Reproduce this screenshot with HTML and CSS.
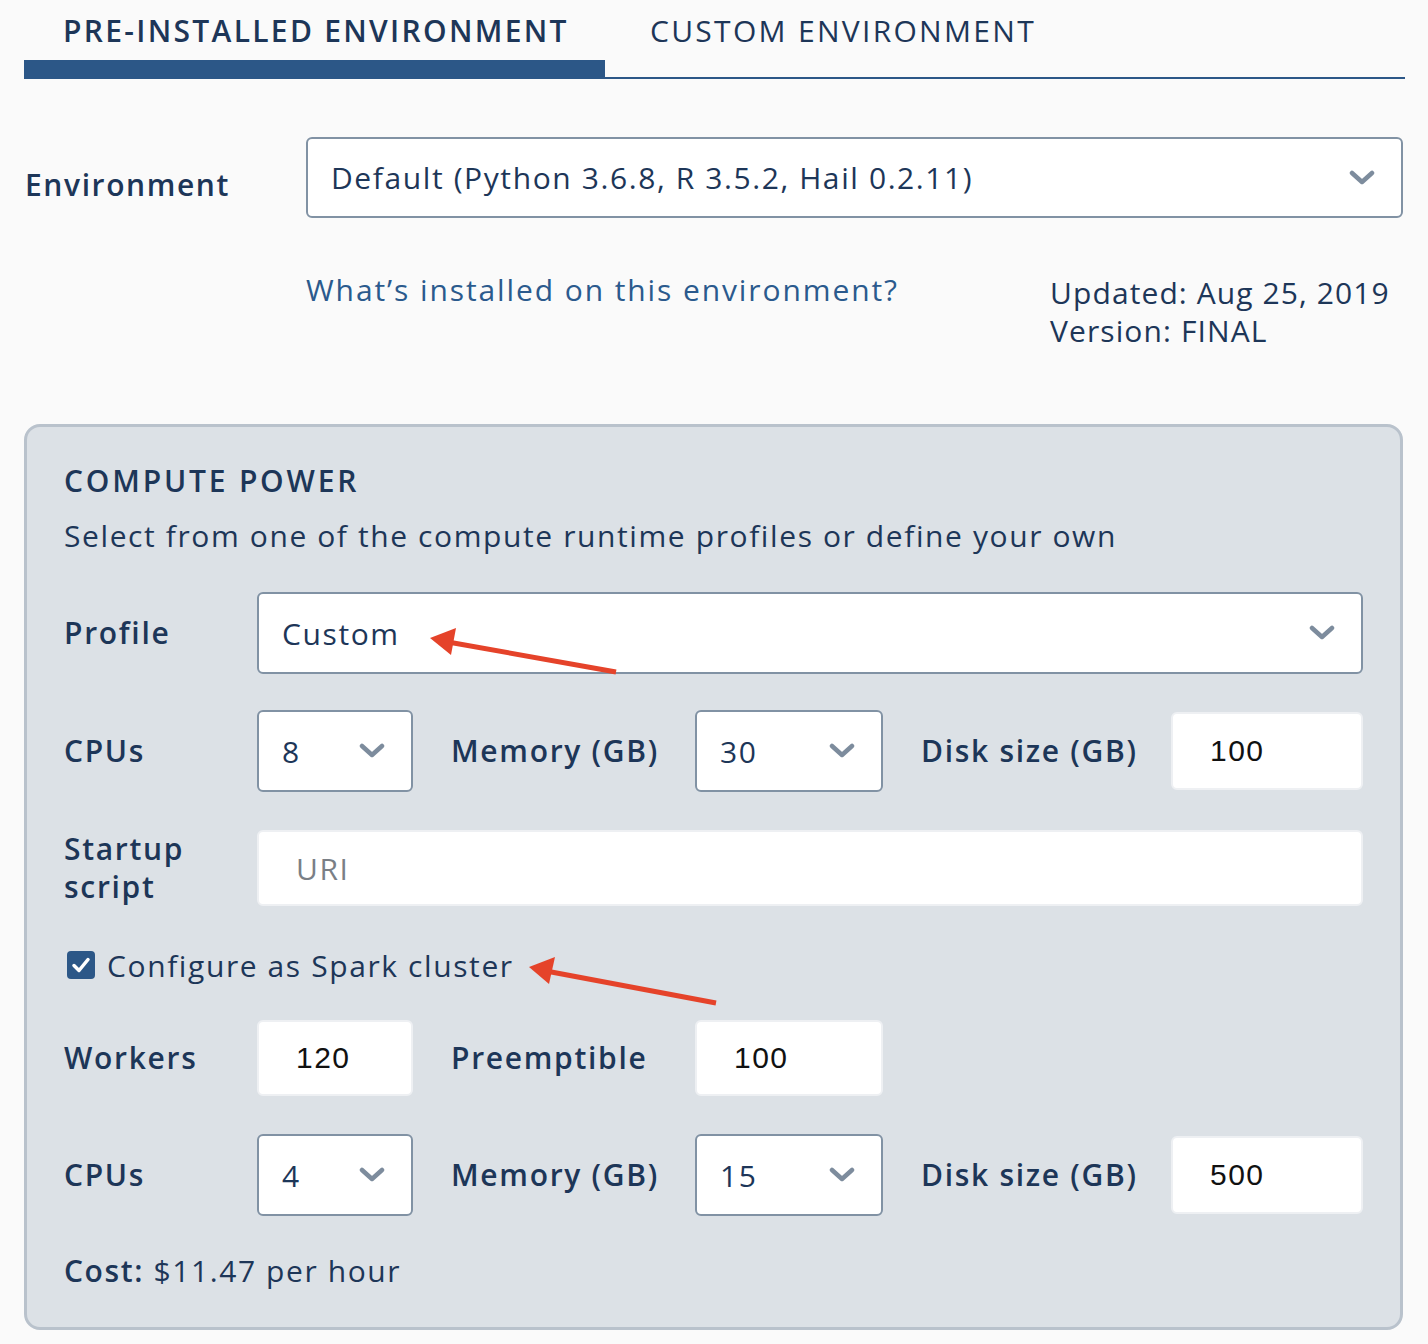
FILE: index.html
```html
<!DOCTYPE html>
<html lang="en">
<head>
<meta charset="utf-8">
<title>Environment</title>
<link rel="stylesheet" href="styles.css">
</head>
<body>
<div class="page">
  <div class="tabs">
    <div class="tab tab-active">PRE-INSTALLED ENVIRONMENT</div>
    <div class="tab tab-idle">CUSTOM ENVIRONMENT</div>
  </div>

  <div class="env-row">
    <div class="env-label">Environment</div>
    <div class="select select-env">
      <span class="select-value">Default (Python 3.6.8, R 3.5.2, Hail 0.2.11)</span>
      <svg class="chev" viewBox="0 0 26 16" width="26" height="16"><polyline points="3,3 13,12 23,3"/></svg>
    </div>
  </div>

  <div class="info-row">
    <a class="env-link" href="#">What’s installed on this environment?</a>
    <div class="meta">
      <div>Updated: Aug 25, 2019</div>
      <div>Version: FINAL</div>
    </div>
  </div>

  <section class="compute">
    <h2 class="compute-title">COMPUTE POWER</h2>
    <p class="compute-sub">Select from one of the compute runtime profiles or define your own</p>

    <div class="grid row-profile">
      <div class="lbl">Profile</div>
      <div class="select span-all">
        <span class="select-value">Custom</span>
        <svg class="chev" viewBox="0 0 26 16" width="26" height="16"><polyline points="3,3 13,12 23,3"/></svg>
      </div>
    </div>

    <div class="grid row-cpus">
      <div class="lbl">CPUs</div>
      <div class="select small">
        <span class="select-value">8</span>
        <svg class="chev" viewBox="0 0 26 16" width="26" height="16"><polyline points="3,3 13,12 23,3"/></svg>
      </div>
      <div class="lbl lbl-pad">Memory (GB)</div>
      <div class="select small">
        <span class="select-value">30</span>
        <svg class="chev" viewBox="0 0 26 16" width="26" height="16"><polyline points="3,3 13,12 23,3"/></svg>
      </div>
      <div class="lbl lbl-pad">Disk size (GB)</div>
      <div class="input num">100</div>
    </div>

    <div class="grid row-startup">
      <div class="lbl">Startup<br>script</div>
      <div class="input span-all placeholder">URI</div>
    </div>

    <label class="check-row">
      <span class="checkbox">
        <svg viewBox="0 0 28 28" width="28" height="28"><polyline points="7,14.5 12,19.5 21,8.5"/></svg>
      </span>
      <span class="check-text">Configure as Spark cluster</span>
    </label>

    <div class="grid row-workers">
      <div class="lbl">Workers</div>
      <div class="input num num-c">120</div>
      <div class="lbl lbl-pad">Preemptible</div>
      <div class="input num num-c">100</div>
    </div>

    <div class="grid row-cpus2">
      <div class="lbl">CPUs</div>
      <div class="select small">
        <span class="select-value">4</span>
        <svg class="chev" viewBox="0 0 26 16" width="26" height="16"><polyline points="3,3 13,12 23,3"/></svg>
      </div>
      <div class="lbl lbl-pad">Memory (GB)</div>
      <div class="select small">
        <span class="select-value">15</span>
        <svg class="chev" viewBox="0 0 26 16" width="26" height="16"><polyline points="3,3 13,12 23,3"/></svg>
      </div>
      <div class="lbl lbl-pad">Disk size (GB)</div>
      <div class="input num">500</div>
    </div>

    <div class="cost"><b>Cost:</b> $11.47 per hour</div>
  </section>

  <svg class="annotations" viewBox="0 0 1428 1344" width="1428" height="1344">
    <line x1="616" y1="672" x2="448" y2="642"/>
    <polygon points="430,638 456,628 451,655"/>
    <line x1="716" y1="1003" x2="546" y2="971"/>
    <polygon points="529,967 555,957 549,984"/>
  </svg>
</div>
</body>
</html>
```

FILE: styles.css
```css
html, body {
  margin: 0;
  padding: 0;
  background: #fafafa;
}

body {
  font-family: "Open Sans", "Noto Sans", sans-serif;
  color: #1d3658;
  font-size: 30px;
  letter-spacing: 1.6px;
}

.page {
  position: relative;
  width: 1428px;
  height: 1344px;
  padding-left: 24px;
  box-sizing: border-box;
}

.tabs {
  display: flex;
  align-items: flex-end;
  width: 1381px;
}

.tab {
  box-sizing: border-box;
  font-size: 30px;
  letter-spacing: 2.3px;
  line-height: 38px;
}

.tab-active {
  width: 581px;
  padding: 12px 0 10px 39px;
  font-weight: 600;
  color: #1d3658;
  border-bottom: 19px solid #2c5787;
}

.tab-idle {
  flex: 1;
  padding: 12px 0 27px 45px;
  font-weight: 400;
  color: #1d3658;
  border-bottom: 2px solid #2c5787;
}

.env-row {
  display: flex;
  align-items: center;
  margin-top: 58px;
  width: 1379px;
}

.env-label {
  width: 282px;
  padding-left: 1px;
  padding-top: 14px;
  font-weight: 600;
  box-sizing: border-box;
}

.select {
  box-sizing: border-box;
  height: 82px;
  background: #fff;
  border: 2px solid #8192a4;
  border-radius: 6px;
  display: flex;
  align-items: center;
  justify-content: space-between;
  padding: 0 26px 0 23px;
}

.select-env {
  flex: 1;
  height: 81px;
}

.select-value {
  font-weight: 400;
  color: #1d3658;
}

.chev {
  flex: none;
  fill: none;
  stroke: #7d8c9d;
  stroke-width: 4.5;
  stroke-linecap: round;
  stroke-linejoin: round;
}

.info-row {
  display: flex;
  justify-content: space-between;
  margin-top: 53px;
  padding-left: 282px;
  width: 1379px;
  box-sizing: border-box;
}

.env-link {
  color: #2b5a8d;
  text-decoration: none;
  line-height: 38px;
  letter-spacing: 1.9px;
}

.meta {
  width: 353px;
  line-height: 38px;
  padding-top: 3px;
  color: #1d3658;
  letter-spacing: 1.1px;
}

.compute {
  margin-top: 74px;
  width: 1379px;
  box-sizing: border-box;
  background: #dce1e6;
  border: 3px solid #b9c2cc;
  border-radius: 16px;
  padding: 35px 37px 37px 37px;
}

.compute-title {
  margin: 0;
  font-size: 30px;
  font-weight: 600;
  line-height: 38px;
  letter-spacing: 2.8px;
}

.compute-sub {
  margin: 17px 0 0 0;
  line-height: 38px;
  font-weight: 400;
  letter-spacing: 1.6px;
}

.grid {
  display: grid;
  grid-template-columns: 193px 156px 282px 188px 288px 192px;
  align-items: center;
}

.row-profile { margin-top: 37px; }
.row-cpus { margin-top: 36px; }
.row-startup { margin-top: 38px; }
.row-workers { margin-top: 36px; }
.row-cpus2 { margin-top: 38px; }

.span-all {
  grid-column: 2 / 7;
}

.lbl {
  font-weight: 600;
  line-height: 38px;
  letter-spacing: 1.7px;
}

.lbl-pad {
  padding-left: 38px;
}

.small {
  padding: 0 26px 0 23px;
}

.input {
  box-sizing: border-box;
  height: 78px;
  background: #fff;
  border: 2px solid #eef0f3;
  border-radius: 6px;
  display: flex;
  align-items: center;
}

.num {
  font-family: "Liberation Sans", "Arial", sans-serif;
  color: #111;
  padding-left: 37px;
  font-size: 30px;
  letter-spacing: 1.5px;
}

.row-workers .input {
  height: 76px;
}

.placeholder {
  height: 76px;
  color: #7a7f86;
  padding-left: 37px;
  font-weight: 400;
}

.check-row {
  display: flex;
  align-items: center;
  margin-top: 40px;
  height: 38px;
  padding-left: 3px;
}

.checkbox {
  width: 28px;
  height: 28px;
  border-radius: 4px;
  background: #2c5787;
  display: flex;
  margin-right: 12px;
}

.checkbox polyline {
  fill: none;
  stroke: #fff;
  stroke-width: 3.5;
  stroke-linecap: round;
  stroke-linejoin: round;
}

.cost {
  margin-top: 36px;
  line-height: 38px;
}

.cost b {
  font-weight: 600;
}

.annotations {
  position: absolute;
  top: 0;
  left: 0;
  pointer-events: none;
}

.annotations line {
  stroke: #e5432a;
  stroke-width: 5;
}

.annotations polygon {
  fill: #e5432a;
}
```
